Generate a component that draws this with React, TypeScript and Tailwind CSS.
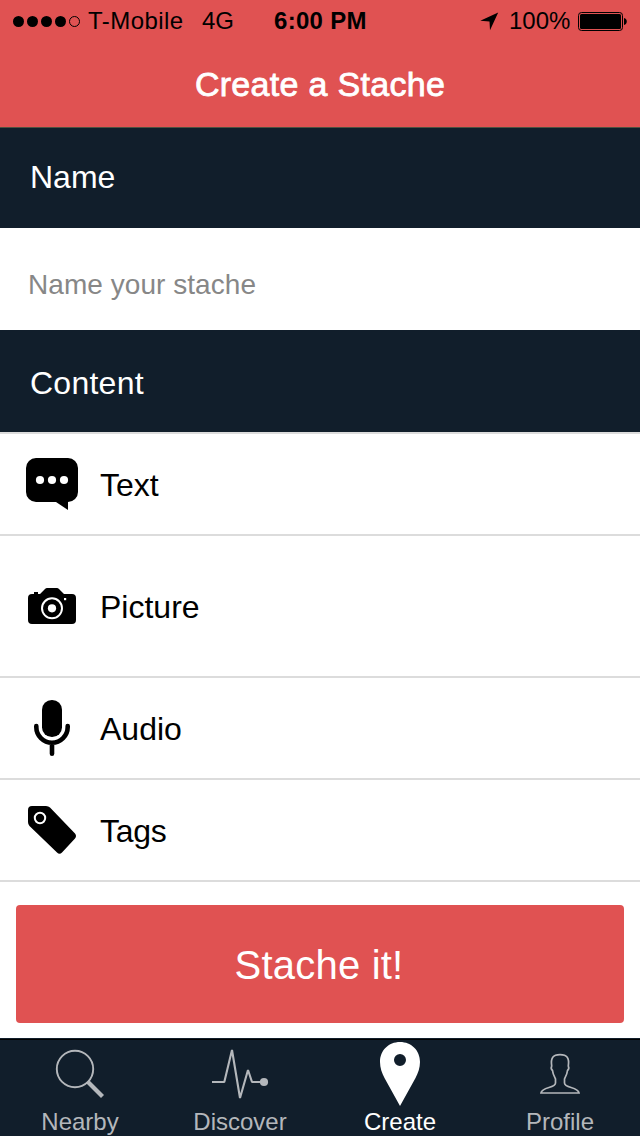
import type { ReactNode } from "react";

const signal = [true, true, true, true, false];

function StatusBar() {
  return (
    <div className="flex h-10 items-center pt-0.5 pl-[13px] text-[24px] leading-10 text-black">
      <svg className="h-[11px] w-[68px] shrink-0" viewBox="0 0 68 11">
        {signal.map((on, i) => (
          <circle key={i} cx={5.5 + i * 14} cy="5.5" r={on ? 5.5 : 5} fill={on ? "#000" : "none"} stroke={on ? "none" : "#000"} />
        ))}
      </svg>
      <span className="ml-[7px] w-[114px] shrink-0 tracking-[0.45px]">T-Mobile</span>
      <span className="w-[72px] shrink-0">4G</span>
      <span className="w-[206px] shrink-0 font-bold tracking-[0.3px]">6:00 PM</span>
      <svg className="h-[19px] w-[19px] shrink-0" viewBox="0 0 19 19">
        <path d="M18.2.5 10 18.3 9.5 9.500.3 8.7Z" />
      </svg>
      <span className="ml-[10px] w-[69px] shrink-0">100%</span>
      <svg className="h-[19px] w-[49px] shrink-0" viewBox="0 0 49 19">
        <rect x=".5" y=".5" width="44" height="18" rx="3" fill="none" stroke="#000" />
        <rect x="2" y="2" width="41" height="15" rx="1.5" />
        <path d="M46 6c3.7.7 3.7 6.300 0 7Z" />
      </svg>
    </div>
  );
}

function SectionHeader({ children, className }: { children: ReactNode; className: string }) {
  return <h2 className={`bg-[#111e2b] pl-[30px] text-[32px] leading-[98px] text-white ${className}`}>{children}</h2>;
}

function Row({ icon, label, className }: { icon: ReactNode; label: string; className: string }) {
  return (
    <li className={`flex items-center border-b-2 border-[#dcdcdc] ${className}`}>
      <span className="ml-5 flex w-16 shrink-0 items-center justify-center">{icon}</span>
      <span className="pt-0.5 pl-4 text-[32px] leading-10 text-black">{label}</span>
    </li>
  );
}

function Tab({ icon, label, active = false }: { icon: ReactNode; label: string; active?: boolean }) {
  return (
    <div className={`flex w-40 flex-col items-center ${active ? "text-white" : "text-[#b4b7bb]"}`}>
      <div className="h-[68px]">{icon}</div>
      <span className="text-[24px] leading-7">{label}</span>
    </div>
  );
}

const TextIcon = () => (
  <svg className="h-[52px] w-[52px]" viewBox="0 0 52 52">
    <path d="M10 0H42A10 10 0 0 1 52 10V34A10 10 0 0 1 42 44V52L30 44H10A10 10 0 0 1 0 34V10A10 10 0 0 1 10 0Z" />
    <g fill="#fff">
      <circle cx="14" cy="22" r="4.100" />
      <circle cx="26" cy="22" r="4.100" />
      <circle cx="38" cy="22" r="4.100" />
    </g>
  </svg>
);

const CameraIcon = () => (
  <svg className="h-9 w-12" viewBox="0 0 48 36">
    <path d="M4 6H6V4H10V6H12L17 1Q18 0 19 0H29Q30 0 31 1L36 6H44Q48 6 48 10V32Q48 36 44 36H4Q0 36 0 32V10Q0 6 4 6Z" />
    <circle cx="24" cy="20.300" r="10" fill="none" stroke="#fff" strokeWidth="2" />
    <circle cx="24" cy="20.300" r="4.100" fill="#fff" />
    <rect x="36" y="10" width="2.200" height="2.200" fill="#fff" />
  </svg>
);

const MicIcon = () => (
  <svg className="h-14 w-9" viewBox="0 0 36 56">
    <rect x="8" y="0" width="20" height="37" rx="9.800" />
    <path d="M2.300 26V27A15.700 15.700 0 0 0 33.700 27V26M18 43V53.700" fill="none" stroke="#000" strokeWidth="4.600" strokeLinecap="round" />
  </svg>
);

const TagIcon = () => (
  <svg className="h-12 w-12" viewBox="0 0 48 48">
    <path d="M4 0H18Q20.500 0 22 1.500L47 27.500Q49 30 47 32.500L34 46.500Q31.500 49 29 46.500L1.500 20Q0 18.500 0 16V4Q0 0 4 0Z" />
    <circle cx="12" cy="12" r="5.200" fill="none" stroke="#fff" strokeWidth="2" />
  </svg>
);

const SearchIcon = () => (
  <svg className="h-16 w-16" viewBox="0 0 64 64" fill="none" stroke="currentColor">
    <circle cx="27" cy="29" r="18.200" strokeWidth="1.900" />
    <path d="M39.500 41.500 54.500 56.500" strokeWidth="4.200" />
  </svg>
);

const PulseIcon = () => (
  <svg className="h-16 w-16" viewBox="0 0 64 64" fill="none" stroke="currentColor">
    <path d="M4 42H16.300L24 10 32 58 40 30 44 42H54" strokeWidth="2.100" strokeLinejoin="bevel" />
    <circle cx="56" cy="42" r="4.100" fill="currentColor" stroke="none" />
  </svg>
);

const PinIcon = () => (
  <svg className="h-[68px] w-10" viewBox="0 0 40 68" fill="currentColor">
    <path fillRule="evenodd" d="M20 2C31.500 2 40 10.500 40 22C40 28 38 33 35.500 38L20 66 4.500 38C2 33 0 28 0 22C0 10.500 8.500 2 20 2ZM20 14A6 6 0 1 0 20 26A6 6 0 1 0 20 14Z" />
  </svg>
);

const PersonIcon = () => (
  <svg className="h-16 w-10" viewBox="0 0 40 64" fill="none" stroke="currentColor" strokeWidth="1.700">
    <path d="M1 53C2 46.500 15.500 48.500 15.500 43V39C14 36 12.700 33.500 12.500 30.500C11.300 29.500 11 27.500 11.700 26C10.500 18 13 14.700 20 14.700S29.500 18 28.300 26C29 27.500 28.700 29.500 27.500 30.500C27.300 33.500 26 36 24.500 39V43C24.500 48.500 38 46.500 39 53Z" />
  </svg>
);

export default function App() {
  return (
    <div className="flex h-[1136px] w-[640px] flex-col overflow-hidden bg-white font-['Liberation_Sans',Arial,sans-serif]">
      <header className="h-32 border-b border-[#4f5140] bg-[#e05252]">
        <StatusBar />
        <h1 className="pt-0.5 text-center text-[34px] leading-[84px] tracking-[0.3px] text-white [-webkit-text-stroke:0.8px_white]">
          Create a Stache
        </h1>
      </header>
      <SectionHeader className="h-[100px]">Name</SectionHeader>
      <div className="h-[102px] px-7 pt-[37px]">
        <input
          className="block h-10 w-full bg-transparent text-[28px] leading-10 tracking-[0.05px] placeholder:text-[#878787]"
          placeholder="Name your stache"
          aria-label="Name"
        />
      </div>
      <SectionHeader className="h-[102px] pt-1 tracking-[0.25px]">Content</SectionHeader>
      <ul className="border-t-2 border-[#dcdcdc]">
        <Row className="h-[102px]" icon={<TextIcon />} label="Text" />
        <Row className="h-[142px]" icon={<CameraIcon />} label="Picture" />
        <Row className="h-[102px]" icon={<MicIcon />} label="Audio" />
        <Row className="h-[102px] tracking-[-0.3px]" icon={<TagIcon />} label="Tags" />
      </ul>
      <div className="flex-1 px-4 pt-[23px]">
        <button className="h-[118px] w-full rounded bg-[#e05252] pt-0.5 pr-0.5 text-[40px] tracking-[0.2px] text-white">Stache it!</button>
      </div>
      <nav className="h-[98px] bg-[#111e2b] pt-px">
        <div className="flex h-[97px] border-t border-black">
          <Tab icon={<SearchIcon />} label="Nearby" />
          <Tab icon={<PulseIcon />} label="Discover" />
          <Tab icon={<PinIcon />} label="Create" active />
          <Tab icon={<PersonIcon />} label="Profile" />
        </div>
      </nav>
    </div>
  );
}
